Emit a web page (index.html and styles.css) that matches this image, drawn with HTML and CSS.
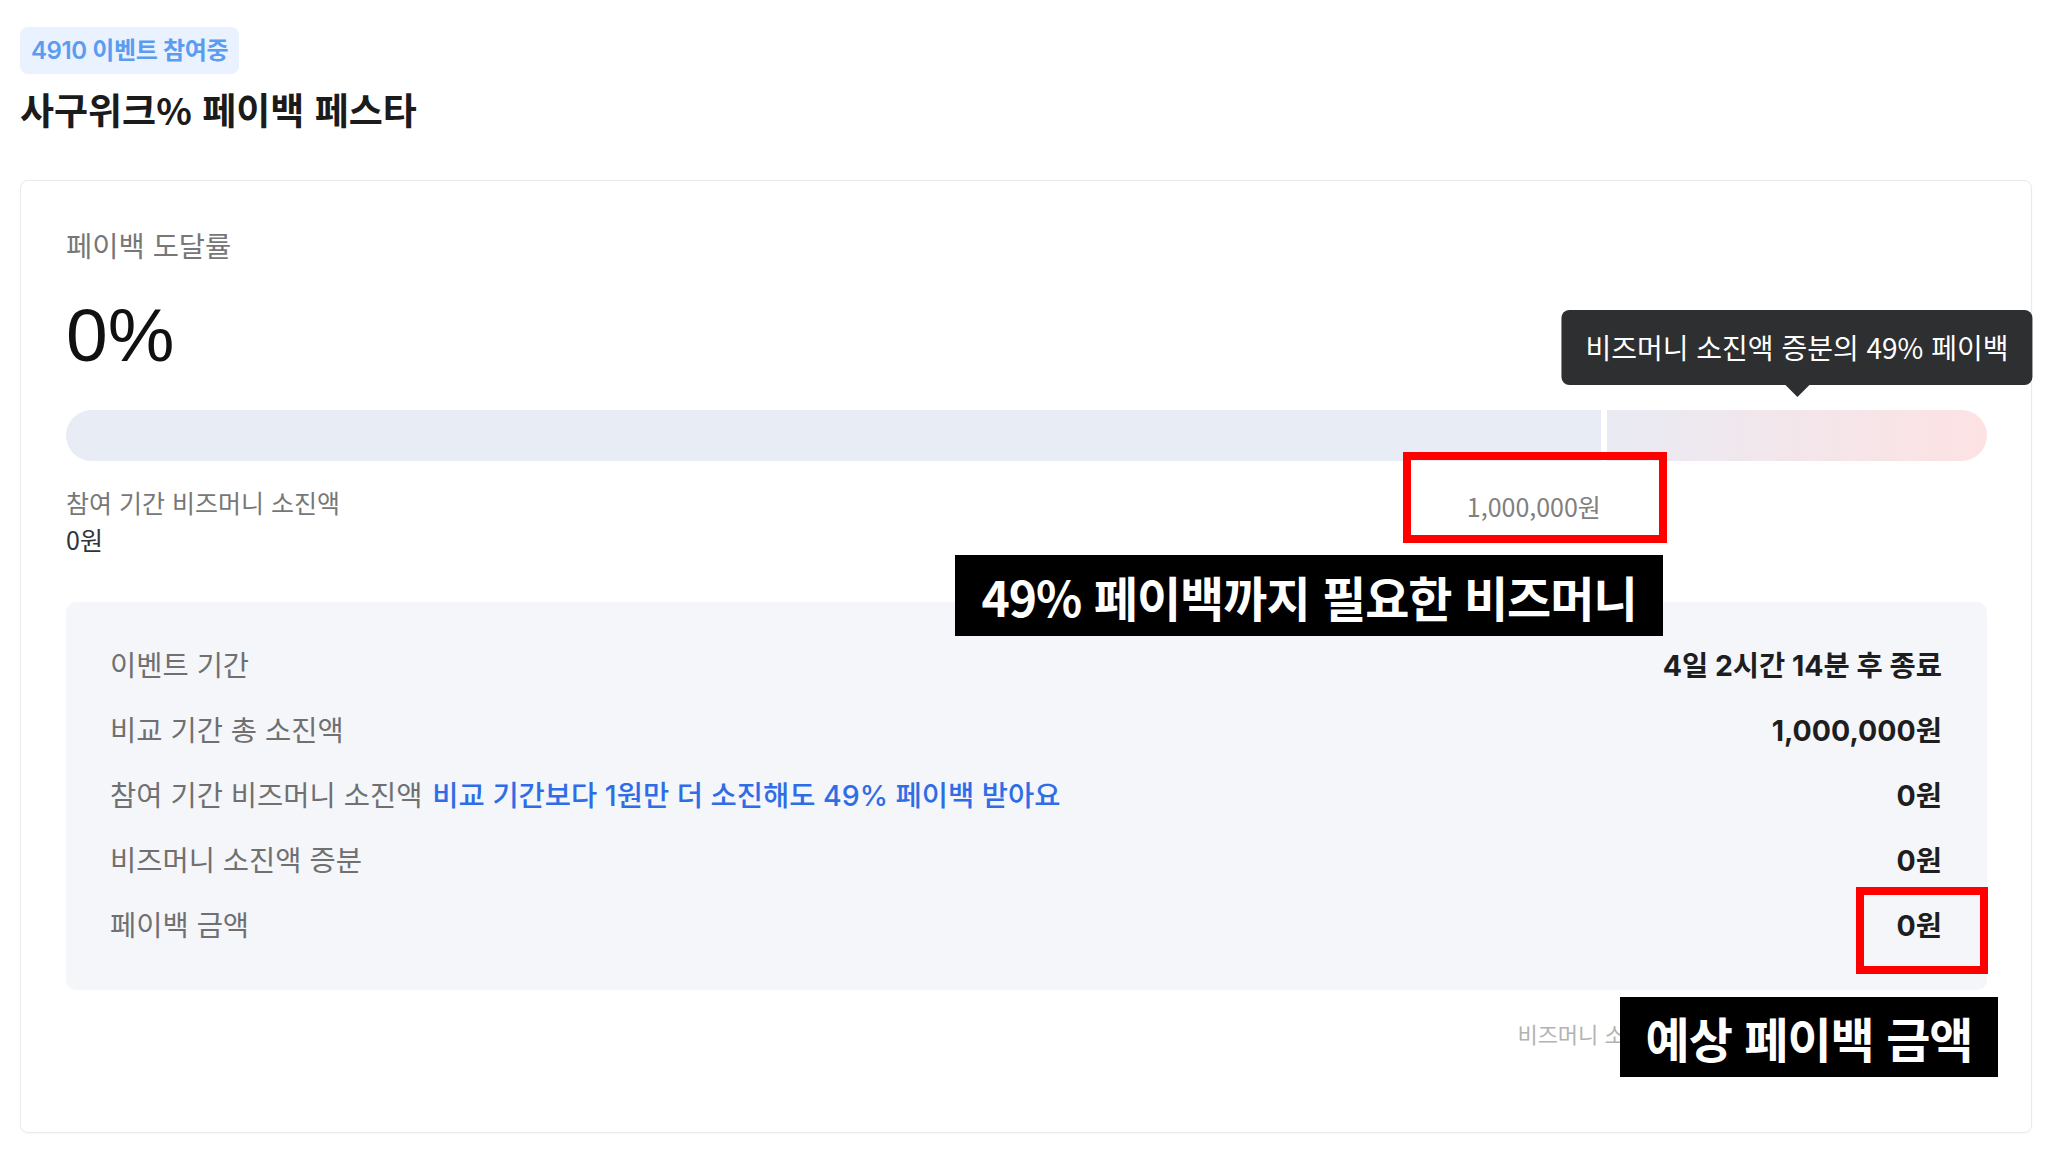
FILE: index.html
```html
<!DOCTYPE html>
<html lang="ko">
<head>
    <meta charset="UTF-8">
    <title>사구위크% 페이백 페스타</title>
    <link rel="stylesheet" href="styles.css">
</head>
<body>

    <span class="badge">4910 이벤트 참여중</span>
    <h1 class="title">사구위크% 페이백 페스타</h1>

    <div class="card">
        <!-- Rate -->
        <p class="rate-label">페이백 도달률</p>
        <p class="rate-value">0%</p>

        <div class="bar">
            <div class="bar-main"></div>
            <div class="bar-bonus">
                <div class="tooltip">비즈머니 소진액 증분의 49% 페이백</div>
            </div>
        </div>

        <div class="bar-info">
            <div>
                <p class="spent-label">참여 기간 비즈머니 소진액</p>
                <p class="spent-amount">0원</p>
            </div>
            <p class="goal-amount">1,000,000원</p>
        </div>

        <!-- Details -->
        <div class="details">
            <div class="row">
                <span class="row-label">이벤트 기간</span>
                <span class="row-value">4일 2시간 14분 후 종료</span>
            </div>
            <div class="row">
                <span class="row-label">비교 기간 총 소진액</span>
                <span class="row-value">1,000,000원</span>
            </div>
            <div class="row">
                <span class="row-label">참여 기간 비즈머니 소진액 <span class="hint">비교 기간보다 1원만 더 소진해도 49% 페이백 받아요</span></span>
                <span class="row-value">0원</span>
            </div>
            <div class="row">
                <span class="row-label">비즈머니 소진액 증분</span>
                <span class="row-value">0원</span>
            </div>
            <div class="row">
                <span class="row-label">페이백 금액</span>
                <span class="row-value">0원</span>
            </div>
        </div>

        <p class="note">비즈머니 소진액은 매일 오전 중에 업데이트돼요</p>

        <!-- Annotations -->
        <div class="mark mark-goal"></div>
        <div class="caption caption-goal">49% 페이백까지 필요한 비즈머니</div>
        <div class="mark mark-payback"></div>
        <div class="caption caption-payback">예상 페이백 금액</div>
    </div>

</body>
</html>
```

FILE: styles.css
```css
/* General */
body {
    margin: 0;
    padding: 27px 16px 18px 20px;
    font-family: "Noto Sans CJK KR", "Noto Sans", sans-serif;
    background: #fff;
    color: #222;
}

p {
    margin: 0;
}

.badge {
    display: inline-block;
    height: 47px;
    line-height: 47px;
    padding: 0 11px;
    border-radius: 8px;
    background: #e9f2fe;
    color: #5b9cf0;
    font-family: Inter, "Noto Sans CJK KR", sans-serif;
    font-size: 24px;
    font-weight: 600;
    letter-spacing: -0.4px;
}

.title {
    margin: 12px 0 0;
    font-size: 37px;
    line-height: 46px;
    font-weight: 700;
    color: #1b1b1b;
}

/* Card */
.card {
    position: relative;
    margin-top: 48px;
    padding: 46px 44px 84px 45px;
    border: 1px solid #eaeaea;
    border-radius: 8px;
    box-shadow: 0 1px 3px rgba(0, 0, 0, 0.03);
}

.rate-label {
    font-size: 28.5px;
    line-height: 36px;
    color: #777;
}

.rate-value {
    margin-top: 34px;
    font-family: "Liberation Sans", Arial, sans-serif;
    font-size: 75px;
    line-height: 76px;
    color: #111;
}

/* Progress bar */
.bar {
    display: flex;
    gap: 6px;
    height: 51px;
    margin-top: 37px;
}

.bar-main {
    width: 79.9%;
    background: #e8ecf5;
    border-radius: 26px 0 0 26px;
}

.bar-bonus {
    position: relative;
    flex: 1;
    background: linear-gradient(90deg, #e9eaf3, #fde2e3);
    border-radius: 0 26px 26px 0;
}

.tooltip {
    position: absolute;
    bottom: calc(100% + 25px);
    left: 50%;
    transform: translateX(-50%);
    height: 75px;
    line-height: 75px;
    padding: 0 24px;
    border-radius: 8px;
    background: #2e2f31;
    color: #fff;
    font-size: 28px;
    white-space: nowrap;
}

.tooltip::after {
    content: "";
    position: absolute;
    top: 100%;
    left: 50%;
    margin-left: -12px;
    border: 12px solid transparent;
    border-top-color: #2e2f31;
    border-bottom: 0;
}

.bar-info {
    display: flex;
    justify-content: space-between;
    width: 79.9%;
    margin-top: 24px;
}

.spent-label,
.spent-amount,
.goal-amount {
    font-size: 25px;
    line-height: 34px;
}

.spent-label {
    color: #777;
}

.spent-amount {
    margin-top: 3px;
    color: #333;
}

.goal-amount {
    margin-top: 4px;
    color: #808080;
}

/* Details box */
.details {
    margin-top: 46px;
    padding: 29px 45px 34px 44px;
    background: #f4f6fa;
    border-radius: 10px;
}

.row {
    display: flex;
    justify-content: space-between;
    align-items: center;
    height: 65px;
}

.row-label {
    font-size: 28.5px;
    color: #707070;
}

.row-value {
    font-family: Inter, "Noto Sans CJK KR", sans-serif;
    font-size: 28.5px;
    font-weight: 700;
    color: #1e1e1e;
}

.hint {
    margin-left: 2px;
    font-family: Inter, "Noto Sans CJK KR", sans-serif;
    font-weight: 500;
    color: #2f6de6;
}

.note {
    margin-top: 28px;
    padding-right: 34px;
    text-align: right;
    font-size: 22px;
    line-height: 30px;
    color: #b3b3b3;
}

/* Annotation overlay */
.mark {
    position: absolute;
    box-sizing: border-box;
    border: 8px solid #ff0000;
}

.mark-goal {
    left: 1382px;
    top: 271px;
    width: 264px;
    height: 91px;
}

.mark-payback {
    left: 1835px;
    top: 706px;
    width: 132px;
    height: 87px;
}

.caption {
    position: absolute;
    display: flex;
    align-items: center;
    justify-content: center;
    background: #000;
    color: #fff;
    font-size: 48px;
    font-weight: 700;
    letter-spacing: -1px;
    white-space: nowrap;
}

.caption-goal {
    left: 934px;
    top: 374px;
    width: 708px;
    height: 81px;
}

.caption-payback {
    left: 1599px;
    top: 816px;
    width: 378px;
    height: 80px;
}
```
